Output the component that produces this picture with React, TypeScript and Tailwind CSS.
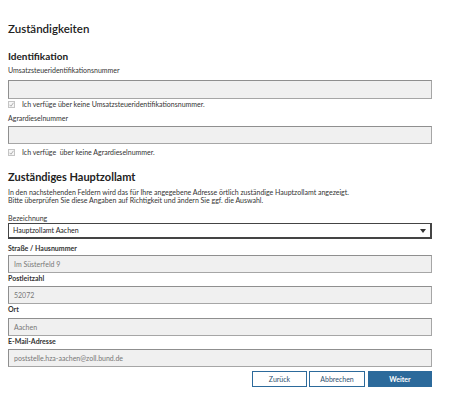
import React from 'react';

const font = { fontFamily: 'Lato, "Noto Sans", sans-serif' };

function Label ({ children, bold, className }: { children: React.ReactNode, bold?: boolean, className?: string }) {
  return (
    <div className={`text-[7px] leading-[9px] text-[#333] ${bold ? 'font-bold' : ''} ${className ?? ''}`}>{children}</div>
  );
}

function ReadonlyInput ({ value, className }: { value?: string, className?: string }) {
  return (
    <div className={`h-[18px] w-full border border-[#a6a6a6] border-t-[#8f8f8f] border-l-[#8f8f8f] bg-[#f0f0f0] px-[5px] flex items-center text-[7px] text-[#777] ${className ?? ''}`}>
      {value}
    </div>
  );
}

function Check ({ children }: { children: React.ReactNode }) {
  return (
    <div className="flex items-center gap-[7px] h-[9px]">
      <span className="w-[7px] h-[7px] border border-[#c4c4c4] bg-[#f6f6f6] flex items-center justify-center">
        <svg width="5" height="5" viewBox="0 0 10 10">
          <path d="M1 5.5 L4 8.5 L9 1.5" fill="none" stroke="#a0a0a0" strokeWidth="1.6" />
        </svg>
      </span>
      <span className="text-[7px] text-[#333]">{children}</span>
    </div>
  );
}

function Button ({ children, primary, className }: { children: React.ReactNode, primary?: boolean, className?: string }) {
  return (
    <button className={`h-[16px] border text-[7px] flex items-center justify-center ${primary ? 'bg-[#2c6a9b] border-[#2c6a9b] text-white font-bold' : 'bg-white border-[#2c6a9b] text-[#2c4f70]'} ${className ?? ''}`}>
      {children}
    </button>
  );
}

export default function App () {
  return (
    <div className="w-[450px] h-[396px] bg-white" style={font}>
      <div className="w-[432px] pl-[8px] pt-[21px]">
        <h1 className="text-[11.5px] leading-[16px] font-semibold text-[#222]">Zuständigkeiten</h1>

        <h2 className="mt-[13px] text-[10px] leading-[13px] font-bold text-[#222]">Identifikation</h2>
        <Label className="mt-[3px] text-[7.5px]">Umsatzsteueridentifikationsnummer</Label>
        <ReadonlyInput className="mt-[5px] h-[19px]" />
        <div className="mt-[1px]">
          <Check>Ich verfüge über keine Umsatzsteueridentifikationsnummer.</Check>
        </div>
        <Label className="mt-[5px]">Agrardieselnummer</Label>
        <ReadonlyInput className="mt-[3px]" />
        <div className="mt-[4px]">
          <Check>Ich verfüge&nbsp; über keine Agrardieselnummer.</Check>
        </div>

        <h2 className="mt-[13px] text-[11px] leading-[13px] font-bold text-[#222]">Zuständiges Hauptzollamt</h2>
        <div className="mt-[5px] text-[7px] leading-[8px] text-[#333]">
          <p>In den nachstehenden Feldern wird das für Ihre angegebene Adresse örtlich zuständige Hauptzollamt angezeigt.</p>
          <p>Bitte überprüfen Sie diese Angaben auf Richtigkeit und ändern Sie ggf. die Auswahl.</p>
        </div>
        <Label className="mt-[10px]">Bezeichnung</Label>
        <div className="mt-0 h-[16px] w-full border border-[#444] border-r-2 border-b-2 bg-white pl-[4px] pr-[4px] flex items-center justify-between text-[7px] text-[#222]">
          <span>Hauptzollamt Aachen</span>
          <svg width="6" height="4" viewBox="0 0 6 4"><path d="M0 0 H6 L3 4 Z" fill="#333" /></svg>
        </div>

        <Label bold className="mt-[5px]">Straße / Hausnummer</Label>
        <ReadonlyInput className="mt-[2px]" value="Im Süsterfeld 9" />
        <Label bold className="mt-[1px]">Postleitzahl</Label>
        <ReadonlyInput className="mt-[3px]" value="52072" />
        <Label bold className="mt-[1px]">Ort</Label>
        <ReadonlyInput className="mt-[4px]" value="Aachen" />
        <Label bold className="mt-[1px]">E-Mail-Adresse</Label>
        <ReadonlyInput className="mt-[3px]" value="poststelle.hza-aachen@zoll.bund.de" />

        <div className="mt-[4px] flex justify-end gap-[2px]">
          <Button className="w-[55px]">Zurück</Button>
          <Button className="w-[56px] mr-[1px]">Abbrechen</Button>
          <Button primary className="w-[64px]">Weiter</Button>
        </div>
      </div>
    </div>
  );
}
